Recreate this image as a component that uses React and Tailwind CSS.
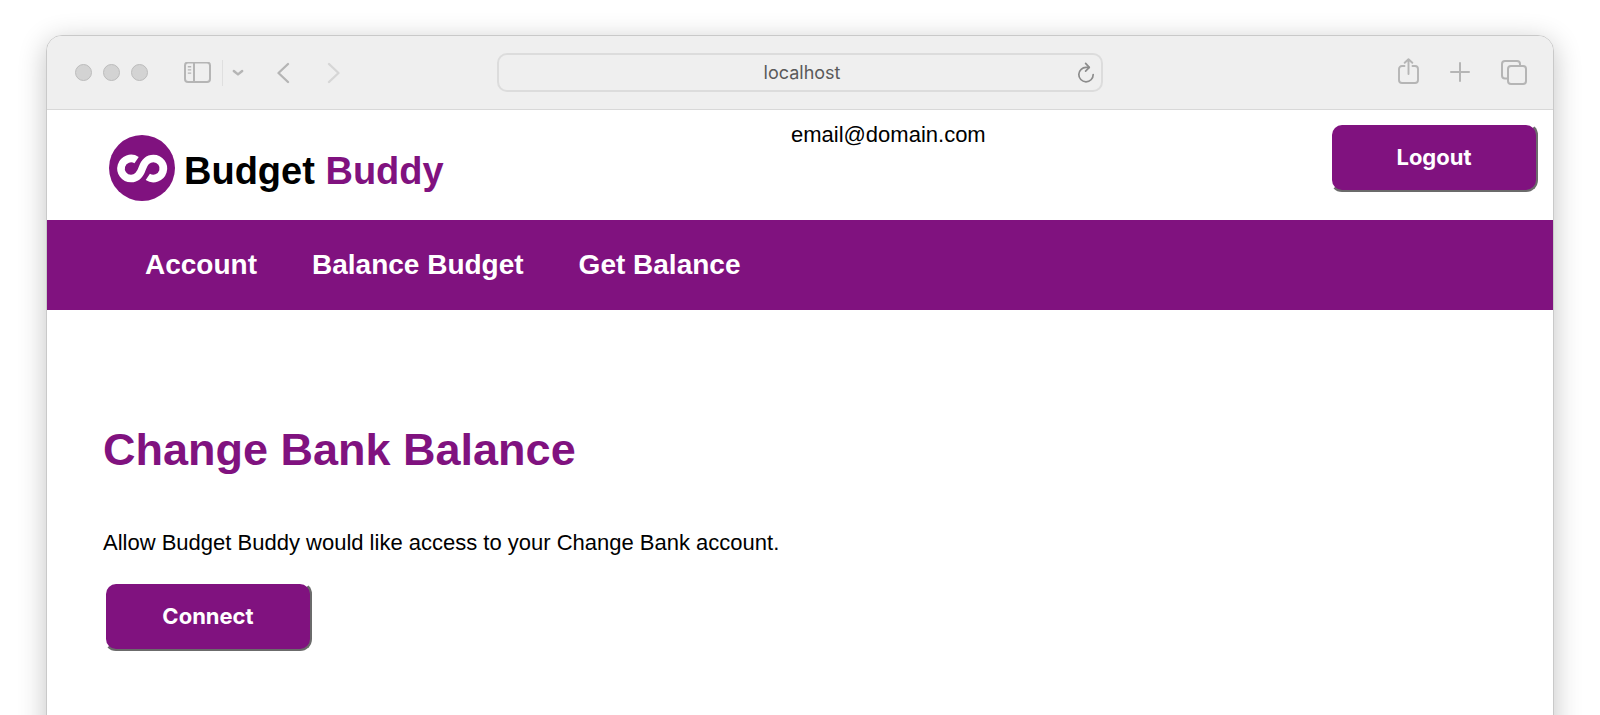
const navItems = [
  { href: "#account", label: "Account" },
  { href: "#balance-budget", label: "Balance Budget" },
  { href: "#get-balance", label: "Get Balance" },
];

function PrimaryButton({ children }) {
  return (
    <button
      type="button"
      className="m-px w-52 h-[69px] rounded-xl border-2 border-t-white border-l-white border-r-[#6b6b6b] border-b-[#6b6b6b] bg-[#80127f] font-['Inter',sans-serif] text-[22px] font-bold text-white"
    >
      {children}
    </button>
  );
}

function Logo() {
  return (
    <a href="#home" className="flex items-start gap-[9px] pr-1">
      <svg viewBox="0 0 66 66" className="size-[66px]" aria-hidden="true">
        <circle cx="33" cy="33" r="33" fill="#80127f" />
        <path
          d="M27.600 25.200A10 10 0 1 0 22 43.500C28 43.500 31.200 39.500 33.200 33.500S38.400 23.500 44.400 23.500A10 10 0 1 1 38.800 41.800"
          fill="none"
          stroke="#fff"
          strokeWidth="7.600"
        />
      </svg>
      <span className="pt-[3px] text-[38px] leading-[66px] font-bold text-black">
        Budget <span className="text-[#80127f]">Buddy</span>
      </span>
    </a>
  );
}

function BrowserBar() {
  return (
    <div className="grid grid-cols-[1fr_606px_1fr] items-center h-[74px] px-7 border-b border-[#d8d8d8] bg-[#efefef] text-[#b5b5b5]">
      <div className="flex items-center">
        <div className="flex gap-[11px]">
          <span className="size-[17px] rounded-full border border-[#bcbcbc] bg-[#d3d3d3]" />
          <span className="size-[17px] rounded-full border border-[#bcbcbc] bg-[#d3d3d3]" />
          <span className="size-[17px] rounded-full border border-[#bcbcbc] bg-[#d3d3d3]" />
        </div>
        <button type="button" aria-label="Sidebar" className="ml-9">
          <svg width="27" height="22" viewBox="0 0 27 22" fill="none" stroke="currentColor" strokeWidth="2">
            <rect x="1" y="0.500" width="25" height="19.500" rx="3" />
            <path d="M10 0.500v19.500" />
            <path d="M3.800 4.700h3.400M3.800 7.900h3.400M3.800 11.100h3.400" strokeWidth="1.400" />
          </svg>
        </button>
        <span className="ml-[11px] w-px h-[26px] bg-[#dfdfdf]" />
        <button type="button" aria-label="Tab groups" className="ml-[9px]">
          <svg width="12" height="8" viewBox="0 0 12 8" fill="none" stroke="currentColor" strokeWidth="2.400" strokeLinecap="round" strokeLinejoin="round">
            <path d="M1.800 2L6 5.400 10.200 2" />
          </svg>
        </button>
        <button type="button" aria-label="Back" className="ml-[33px]">
          <svg width="13" height="22" viewBox="0 0 13 22" fill="none" stroke="currentColor" strokeWidth="2.300" strokeLinecap="round" strokeLinejoin="round">
            <path d="M11 2L1.500 11l9.500 9" />
          </svg>
        </button>
        <button type="button" aria-label="Forward" className="ml-[37px] text-[#d6d6d6]">
          <svg width="13" height="22" viewBox="0 0 13 22" fill="none" stroke="currentColor" strokeWidth="2.300" strokeLinecap="round" strokeLinejoin="round">
            <path d="M2 2l9.500 9L2 20" />
          </svg>
        </button>
      </div>

      {/* Address bar */}
      <div className="relative">
        <input
          type="text"
          aria-label="Address"
          defaultValue="localhost"
          className="block w-full h-[39px] pl-1 rounded-[10px] border-2 border-[#dcdcdc] bg-[#efefef] text-center font-['Inter',sans-serif] text-[18px] text-[#5a5a5a]"
        />
        <button type="button" aria-label="Reload" className="absolute right-2 top-[9px] text-[#8c8c8c]">
          <svg width="18" height="21" viewBox="0 0 18 21" fill="none" stroke="currentColor" strokeWidth="1.700" strokeLinecap="round" strokeLinejoin="round">
            <path d="M12 5.400H9.400A7.200 7.200 0 1 0 16.200 12.600" />
            <path d="M8.600 1.400l3.700 4-3.700 3.800" />
          </svg>
        </button>
      </div>

      <div className="flex items-center justify-end gap-[31px] -mr-0.5">
        <button type="button" aria-label="Share">
          <svg width="21" height="30" viewBox="0 0 21 30" fill="none" stroke="currentColor" strokeWidth="1.900" strokeLinecap="round" strokeLinejoin="round">
            <path d="M6.500 8H4a3 3 0 0 0-3 3v11a3 3 0 0 0 3 3h13a3 3 0 0 0 3-3V11a3 3 0 0 0-3-3h-2.500" />
            <path d="M10.500 16V1.200M6.700 4.800l3.800-3.600 3.800 3.600" />
          </svg>
        </button>
        <button type="button" aria-label="New tab">
          <svg width="20" height="22" viewBox="0 0 20 22" fill="none" stroke="currentColor" strokeWidth="2" strokeLinecap="round">
            <path d="M10 1v18M1 10h18" />
          </svg>
        </button>
        <button type="button" aria-label="Tab overview">
          <svg width="26" height="26" viewBox="0 0 26 26" fill="none" stroke="currentColor" strokeWidth="2">
            <rect x="7" y="6" width="18" height="18" rx="3" />
            <path d="M7 18.500H4a3 3 0 0 1-3-3V4a3 3 0 0 1 3-3h12a3 3 0 0 1 3 3v2" />
          </svg>
        </button>
      </div>
    </div>
  );
}

export default function App() {
  return (
    <div className="min-h-screen flex flex-col overflow-hidden bg-white px-[46px] pt-[35px] font-['Liberation_Sans',Arial,sans-serif] text-[22px] text-black">
      {/* The window runs off the bottom of the page */}
      <div className="flex-1 -mb-12 overflow-hidden rounded-t-2xl border border-[#c9c9c9] bg-white shadow-[0_6px_28px_rgba(0,0,0,0.24)]">
        <BrowserBar />

        <header className="flex items-start justify-between h-[110px] pl-[62px] pr-[14px] pt-3">
          <div className="pt-[13px]">
            <Logo />
          </div>
          <p className="leading-[26px]">email@domain.com</p>
          <PrimaryButton>Logout</PrimaryButton>
        </header>

        <nav className="flex items-center gap-[55px] h-[90px] px-[98px] bg-[#80127f] text-[28px] font-bold text-white">
          {navItems.map(({ href, label }) => (
            <a key={href} href={href}>
              {label}
            </a>
          ))}
        </nav>

        <main className="px-14 pt-[114px] pb-28">
          <h1 className="text-[45px] leading-[52px] font-bold text-[#80127f]">Change Bank Balance</h1>
          <p className="mt-[54px] mb-[25px] leading-[26px]">
            Allow Budget Buddy would like access to your Change Bank account.
          </p>
          <PrimaryButton>Connect</PrimaryButton>
        </main>
      </div>
    </div>
  );
}
